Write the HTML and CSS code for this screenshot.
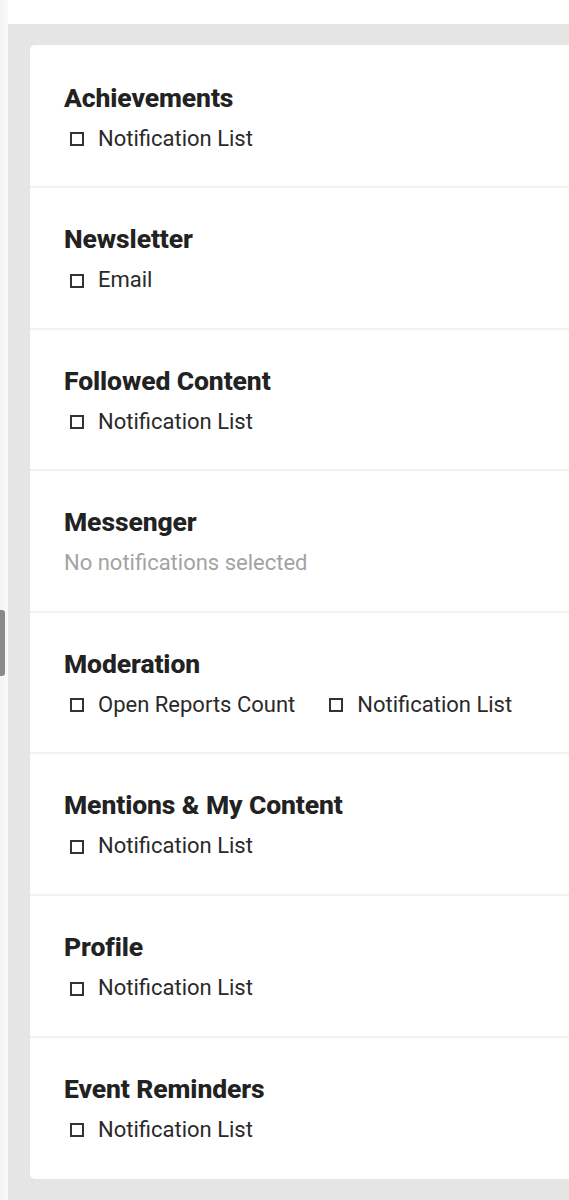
FILE: index.html
```html
<!DOCTYPE html>
<html lang="en">
<head>
<meta charset="utf-8">
<title>Notification Preferences</title>
<link rel="stylesheet" href="styles.css">
</head>
<body>
<div class="page">
  <div class="gutter"></div>
  <div class="main">
    <div class="topbar"></div>
    <div class="area">
      <div class="card">
        <section class="row">
          <h2 class="title">Achievements</h2>
          <div class="options"><span class="opt"><span class="box"></span>Notification List</span></div>
        </section>
        <section class="row">
          <h2 class="title">Newsletter</h2>
          <div class="options"><span class="opt"><span class="box"></span>Email</span></div>
        </section>
        <section class="row">
          <h2 class="title">Followed Content</h2>
          <div class="options"><span class="opt"><span class="box"></span>Notification List</span></div>
        </section>
        <section class="row">
          <h2 class="title">Messenger</h2>
          <div class="options"><span class="muted">No notifications selected</span></div>
        </section>
        <section class="row">
          <h2 class="title">Moderation</h2>
          <div class="options"><span class="opt"><span class="box"></span>Open Reports Count</span><span class="opt"><span class="box"></span>Notification List</span></div>
        </section>
        <section class="row">
          <h2 class="title">Mentions &amp; My Content</h2>
          <div class="options"><span class="opt"><span class="box"></span>Notification List</span></div>
        </section>
        <section class="row">
          <h2 class="title">Profile</h2>
          <div class="options"><span class="opt"><span class="box"></span>Notification List</span></div>
        </section>
        <section class="row">
          <h2 class="title">Event Reminders</h2>
          <div class="options"><span class="opt"><span class="box"></span>Notification List</span></div>
        </section>
      </div>
    </div>
  </div>
  <div class="thumb"></div>
</div>
</body>
</html>
```
FILE: styles.css
```css
html, body {
  margin: 0;
  padding: 0;
  background: #ffffff;
  overflow: hidden;
}
body {
  font-family: Roboto, "Liberation Sans", sans-serif;
  color: #2b2b2b;
}
.page {
  position: relative;
  display: flex;
  width: 569px;
  min-height: 1200px;
  overflow: hidden;
}
.gutter {
  flex: 0 0 8px;
  background: linear-gradient(to right, #f3f3f3, #fafafa);
}
.main {
  flex: 1 1 auto;
  display: flex;
  flex-direction: column;
  min-width: 0;
}
.topbar {
  height: 24px;
  background: #ffffff;
}
.area {
  flex: 1 1 auto;
  background: #e5e5e5;
  padding: 21px 0 22px 22px;
}
.card {
  width: 620px;
  padding-top: 1.5px;
  background: #ffffff;
  border-radius: 5px 0 0 5px;
}
.row {
  padding: 36px 0 33.6px 34px;
  border-bottom: 2px solid #f2f2f2;
}
.row:last-child {
  border-bottom: none;
  padding-bottom: 35px;
}
.title {
  margin: 0 0 12px;
  font-size: 26.5px;
  line-height: 30px;
  font-weight: 800;
  color: #222222;
  letter-spacing: -0.1px;
}
.options {
  display: flex;
  gap: 28px;
  font-size: 22px;
  line-height: 28px;
}
.opt {
  display: inline-flex;
  align-items: center;
  padding-left: 6px;
  color: #2a2a2a;
}
.box {
  width: 10px;
  height: 10px;
  border: 2px solid #333333;
  margin-right: 14px;
  margin-top: 1px;
}
.muted {
  color: #a3a3a3;
}
.thumb {
  position: absolute;
  left: 0;
  top: 610px;
  width: 5px;
  height: 66px;
  background: #8a8a8a;
  border-radius: 0 3px 3px 0;
}
```
